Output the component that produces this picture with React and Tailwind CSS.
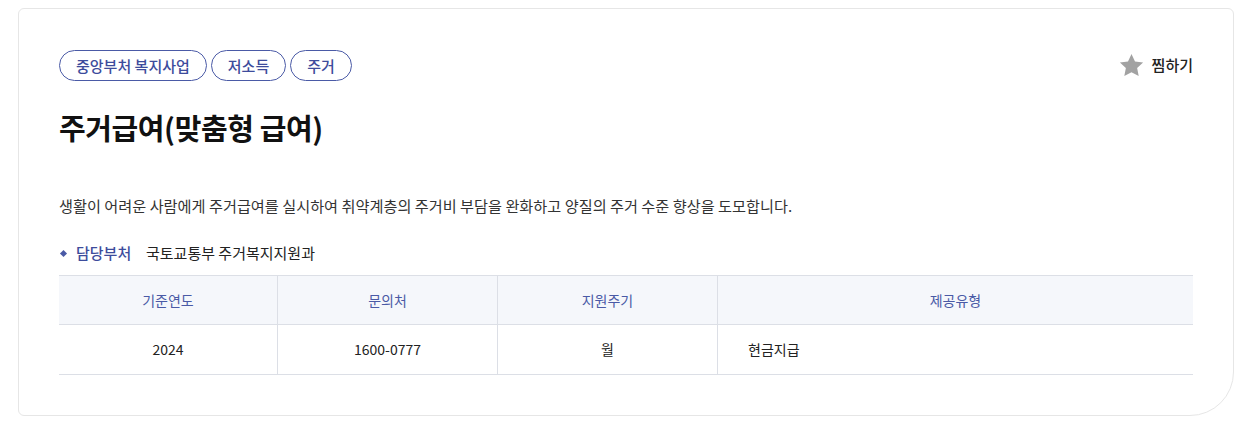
import React from 'react';

const tags = ['중앙부처 복지사업', '저소득', '주거'];

const columns = [
    { head: '기준연도', value: '2024', w: 'w-[219px]', align: 'text-center' },
    { head: '문의처', value: '1600-0777', w: 'w-[220px]', align: 'text-center' },
    { head: '지원주기', value: '월', w: 'w-[220px]', align: 'text-center' },
    { head: '제공유형', value: '현금지급', w: 'flex-1', align: 'text-left pl-[30px]' },
];

export default function App() {
    return (
        <div className="w-[1242px] h-[424px] bg-white pt-[8px] pl-[18px]" style={{ fontFamily: '"Noto Sans CJK KR", "Noto Sans", sans-serif' }}>
            <div className="w-[1216px] h-[408px] border border-[#e6e6e6] rounded-[6px] rounded-br-[44px] px-[40px] pt-[41px]">
                <div className="flex items-start justify-between">
                    <div className="flex gap-[4px]">
                        {tags.map(t => (
                            <span key={t} className="h-[31px] px-[16px] flex items-center rounded-full border border-[#4a5aa6] text-[#3d4c9c] text-[15px] font-medium leading-none">
                                {t}
                            </span>
                        ))}
                    </div>
                    <button className="flex items-center gap-[7px] mt-[2px] text-[15px] font-medium text-[#222]">
                        <svg width="27" height="27" viewBox="0 0 24 24">
                            <path d="M12 1.8l3.1 6.6 7.2.9-5.3 5 1.4 7.1L12 17.9l-6.4 3.5 1.4-7.1-5.3-5 7.2-.9z" fill="#a2a2a2" />
                        </svg>
                        찜하기
                    </button>
                </div>

                <h1 className="mt-[27px] text-[29px] leading-[38px] font-bold text-[#111] tracking-[-0.4px]">주거급여(맞춤형 급여)</h1>

                <p className="mt-[47px] text-[15.2px] leading-[24px] text-[#333]">
                    생활이 어려운 사람에게 주거급여를 실시하여 취약계층의 주거비 부담을 완화하고 양질의 주거 수준 향상을 도모합니다.
                </p>

                <div className="mt-[24px] flex items-center text-[15px] leading-[24px]">
                    <span className="w-[5px] h-[5px] bg-[#4a5aa6] rotate-45 ml-[2px] mr-[10px]"></span>
                    <span className="font-medium text-[#3d4c9c] w-[70px]">담당부처</span>
                    <span className="text-[#222]">국토교통부 주거복지지원과</span>
                </div>

                <div className="mt-[10px] border-t border-b border-[#dcdfe6]">
                    <div className="flex h-[49px] bg-[#f5f7fb] border-b border-[#dcdfe6]">
                        {columns.map((c, i) => (
                            <div key={c.head} className={`${c.w} flex items-center justify-center text-[14px] text-[#4a5aa6] ${i < 3 ? 'border-r border-[#dcdfe6]' : ''}`}>
                                {c.head}
                            </div>
                        ))}
                    </div>
                    <div className="flex h-[49px]">
                        {columns.map((c, i) => (
                            <div key={c.head} className={`${c.w} ${c.align} flex items-center text-[14px] text-[#222] ${i < 3 ? 'justify-center border-r border-[#dcdfe6]' : ''}`}>
                                {c.value}
                            </div>
                        ))}
                    </div>
                </div>
            </div>
        </div>
    );
}
